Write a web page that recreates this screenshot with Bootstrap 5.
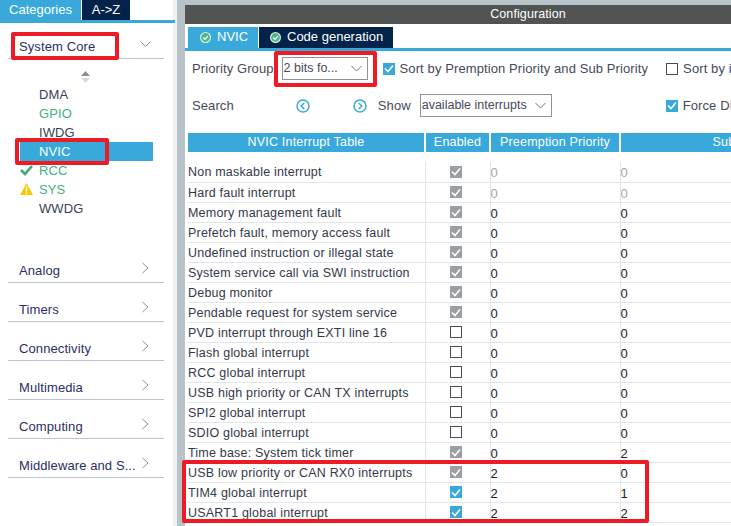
<!DOCTYPE html>
<html lang="en">

<head>
    <meta charset="utf-8">
    <meta name="viewport" content="width=device-width, initial-scale=1">
    <title>Configuration</title>
    <link href="https://cdn.jsdelivr.net/npm/bootstrap@5.3.2/dist/css/bootstrap.min.css" rel="stylesheet">
    <style>
        html, body {
            height: 526px;
            overflow: hidden;
        }

        body {
            background-color: #fff;
            font-family: "Liberation Sans", Arial, sans-serif;
            font-size: 13px;
            color: #3a3f55;
        }

        .app-wrap {
            width: 731px;
            height: 526px;
            position: relative;
            overflow: hidden;
        }

        /* left panel */
        .side-panel {
            width: 177px;
            flex: none;
            border-right: 4px solid #eef0f1;
        }

        .side-tabs {
            height: 23px;
            margin-right: -2px;
            border-bottom: 3px solid #39a9db;
        }

        .side-tab {
            height: 20px;
            line-height: 19px;
            color: #fff;
            text-align: center;
        }

        .tab-blue {
            background-color: #39a9db;
        }

        .tab-navy {
            background-color: #03234b;
        }

        .cat-head {
            height: 39px;
            margin: 0 9px 0 8px;
            padding: 0 13px 2px 11px;
            border-bottom: 1px solid #b9c4cc;
            color: #2a2f66;
            font-size: 13px;
            letter-spacing: .1px;
            white-space: nowrap;
        }

        .cat-head svg {
            margin-bottom: 6px;
        }

        .cat-first {
            height: 27px;
            margin-top: 9px;
        }

        .cat-arrow {
            margin-right: 2px;
        }

        .scroll-mark {
            height: 26px;
            padding: 12px 0 0 81px;
        }

        .core-list {
            height: 133px;
            margin-bottom: 26px;
        }

        .core-item {
            height: 19px;
            line-height: 19px;
            margin: 0 20px;
            padding-left: 19px;
            position: relative;
            letter-spacing: .1px;
        }

        .core-green {
            color: #3fb27f;
        }

        .core-active {
            background-color: #39a9db;
            color: #fff;
        }

        .core-icon {
            position: absolute;
            left: 0;
            top: 3px;
        }

        /* gutter */
        .split-bar {
            width: 8px;
            flex: none;
            background-color: #b7c3c9;
        }

        /* main */
        .main-panel {
            flex: 1;
            min-width: 0;
            overflow: hidden;
        }

        .top-strip {
            height: 5px;
            background-color: #b7c3c9;
        }

        .title-bar {
            height: 19px;
            line-height: 19px;
            padding-left: 140px;
            background-color: #525453;
            color: #fff;
            text-align: center;
            font-size: 12.5px;
            letter-spacing: .1px;
        }

        .cfg-tabs {
            height: 27px;
            padding: 3px 0 0 3px;
            border-bottom: 3px solid #39a9db;
        }

        .cfg-tab {
            height: 21px;
            line-height: 20px;
            color: #fff;
            white-space: nowrap;
        }

        .tab-nvic {
            width: 70px;
            margin-right: 1px;
            padding-left: 12px;
        }

        .tab-code {
            width: 134px;
            padding-left: 11px;
        }

        .tab-dot {
            vertical-align: -2px;
            margin-right: 6px;
        }

        .opt-row {
            white-space: nowrap;
            letter-spacing: .1px;
            color: #444a5a;
            padding-left: 7px;
        }

        .opt-one {
            height: 35px;
        }

        .opt-two {
            height: 39px;
        }

        .fake-select {
            height: 23px;
            line-height: 21px;
            border: 1px solid #8e9496;
            padding-left: 1px;
            position: relative;
            flex: none;
            font-size: 12.5px;
            letter-spacing: 0;
        }

        .fake-select svg {
            position: absolute;
            right: 5px;
            top: 7px;
        }

        .sel-group {
            width: 86px;
            margin: 0 15px 0 8px;
        }

        .sel-show {
            width: 132px;
            margin-left: 9px;
        }

        .box {
            width: 12px;
            height: 12px;
            display: inline-flex;
            align-items: center;
            justify-content: center;
            flex: none;
            vertical-align: middle;
        }

        .box-gap {
            margin-right: 5px;
        }

        .box-blue {
            background-color: #39a9db;
        }

        .box-gray {
            background-color: #9a9fa3;
        }

        .box-empty {
            border: 1px solid #4a4f55;
        }

        .nav-dot {
            flex: none;
        }

        .nav-prev {
            margin-left: 62px;
        }

        .nav-next {
            margin: 0 11px 0 43px;
        }

        .box-sort {
            margin-left: 18px;
        }

        .box-force {
            margin-left: 114px;
        }

        /* table */
        .irq-table {
            table-layout: fixed;
            width: 684px;
            margin: 8px 0 0 3px;
            border-collapse: collapse;
            font-size: 12.5px;
            letter-spacing: .2px;
        }

        .irq-table th {
            height: 19px;
            padding: 0;
            background-color: #39a9db;
            color: #fff;
            font-weight: 400;
            text-align: center;
            border: 0;
            border-right: 2px solid #fff;
            white-space: nowrap;
            overflow: hidden;
        }

        .irq-table .head-gap td {
            height: 10px;
            padding: 0;
            border: 0;
        }

        .irq-table td {
            height: 20px;
            padding: 2px 0 0;
            border: 0;
            border-bottom: 1px solid #e3e6e8;
            border-right: 1px solid #e3e6e8;
            color: #34384a;
            white-space: nowrap;
            vertical-align: middle;
            line-height: 17px;
        }

        .irq-table td.num {
            color: #1c2030;
            font-size: 13px;
        }

        .irq-table td.num-dim {
            color: #a3a8ab;
        }

        .irq-table td.cell-box {
            padding: 0 4px 0 0;
            text-align: center;
        }

        /* red marks from the reference */
        .red-mark {
            position: absolute;
            border: 4px solid #ed1c24;
            border-radius: 2px;
            pointer-events: none;
        }

        .mark-core {
            left: 11px;
            top: 32px;
            width: 108px;
            height: 28px;
        }

        .mark-nvic {
            left: 15px;
            top: 138px;
            width: 94px;
            height: 27px;
        }

        .mark-group {
            left: 274px;
            top: 51px;
            width: 103px;
            height: 36px;
        }

        .mark-rows {
            left: 182px;
            top: 460px;
            width: 467px;
            height: 63px;
        }
    </style>
</head>

<body>
    <div class="app-wrap d-flex">
        <div class="side-panel">
            <div class="side-tabs d-flex">
                <div class="side-tab tab-blue" style="width: 81px">Categories</div>
                <div class="side-tab tab-navy" style="width: 48px; margin-left: 1px">A-&gt;Z</div>
            </div>
            <div class="cat-head cat-first d-flex justify-content-between align-items-end">
                <span>System Core</span>
                <svg width="11" height="12" viewBox="0 0 11 12" fill="none" stroke="#8a8f94"><path d="M.5 3.5l5 5 5-5"/></svg>
            </div>
            <div class="scroll-mark">
                <svg class="d-block" width="9" height="12" viewBox="0 0 9 12"><path d="M4.5 0L9 5H0z" fill="#8a8f94"/><path d="M0 7h9L4.5 12z" fill="#d5d8da"/></svg>
            </div>
            <div class="core-list" id="coreList"></div>
            <div id="catList"></div>
        </div>

        <div class="split-bar"></div>

        <div class="main-panel">
            <div class="top-strip"></div>
            <div class="title-bar">Configuration</div>
            <div class="cfg-tabs d-flex">
                <div class="cfg-tab tab-blue tab-nvic" id="tabNvic">NVIC</div>
                <div class="cfg-tab tab-navy tab-code" id="tabCode">Code generation</div>
            </div>
            <div class="opt-row opt-one d-flex align-items-center">
                <span>Priority Group</span>
                <div class="fake-select sel-group">2 bits fo...
                    <svg width="11" height="8" viewBox="0 0 11 8" fill="none" stroke="#6f7478"><path d="M.5 1l5 5 5-5"/></svg>
                </div>
                <span class="box box-blue box-gap" id="boxSort"></span>
                <span>Sort by Premption Priority and Sub Priority</span>
                <span class="box box-empty box-gap box-sort"></span>
                <span>Sort by interrupts</span>
            </div>
            <div class="opt-row opt-two d-flex align-items-center">
                <span>Search</span>
                <svg class="nav-dot nav-prev" width="14" height="14" viewBox="0 0 14 14" fill="none" stroke="#39a9db"><circle cx="7" cy="7" r="6" stroke-width="1.5"/><path d="M8.2 4L5.2 7l3 3" stroke-width="1.5"/></svg>
                <svg class="nav-dot nav-next" width="14" height="14" viewBox="0 0 14 14" fill="none" stroke="#39a9db"><circle cx="7" cy="7" r="6" stroke-width="1.5"/><path d="M5.8 4l3 3-3 3" stroke-width="1.5"/></svg>
                <span>Show</span>
                <div class="fake-select sel-show">available interrupts
                    <svg width="11" height="8" viewBox="0 0 11 8" fill="none" stroke="#6f7478"><path d="M.5 1l5 5 5-5"/></svg>
                </div>
                <span class="box box-blue box-gap box-force" id="boxForce"></span>
                <span>Force DMA channels Interrupts</span>
            </div>
            <table class="table irq-table">
                <colgroup>
                    <col style="width: 237px">
                    <col style="width: 65px">
                    <col style="width: 130px">
                    <col style="width: 252px">
                </colgroup>
                <thead>
                    <tr>
                        <th>NVIC Interrupt Table</th>
                        <th>Enabled</th>
                        <th>Preemption Priority</th>
                        <th>Sub Priority</th>
                    </tr>
                </thead>
                <tbody id="irqBody"></tbody>
            </table>
        </div>

        <div class="red-mark mark-core"></div>
        <div class="red-mark mark-nvic"></div>
        <div class="red-mark mark-group"></div>
        <div class="red-mark mark-rows"></div>
    </div>

    <script src="https://cdn.jsdelivr.net/npm/bootstrap@5.3.2/dist/js/bootstrap.bundle.min.js"></script>
    <script>
        var tick = `<svg width="10" height="9" viewBox="0 0 10 9" fill="none" stroke="#fff" stroke-width="1.6"><path d="M1 4.5l3 3 5-6"/></svg>`;
        var tabDot = `<svg class="tab-dot" width="11" height="11" viewBox="0 0 12 12"><circle cx="6" cy="6" r="6" fill="#dff1ea"/><circle cx="6" cy="6" r="4.8" fill="#4fb58a"/><path d="M3.5 6l2 2 3-3.6" fill="none" stroke="#fff" stroke-width="1.3"/></svg>`;

        document.querySelector("#boxSort").innerHTML = tick;
        document.querySelector("#boxForce").innerHTML = tick;
        document.querySelector("#tabNvic").insertAdjacentHTML("afterbegin", tabDot);
        document.querySelector("#tabCode").insertAdjacentHTML("afterbegin", tabDot);

        var core = [
            { name: "DMA" },
            { name: "GPIO", cls: "core-green" },
            { name: "IWDG" },
            { name: "NVIC", cls: "core-active" },
            { name: "RCC", cls: "core-green", icon: `<svg class="core-icon" width="13" height="12" viewBox="0 0 13 12" fill="none" stroke="#3fa873" stroke-width="2.6"><path d="M1 6l4 4 7-8"/></svg>` },
            { name: "SYS", cls: "core-green", icon: `<svg class="core-icon" width="13" height="12" viewBox="0 0 13 12"><path d="M6.5 0L13 12H0z" fill="#fbc902"/><path d="M6.5 3.5v5M6.5 9.5v1.5" stroke="#fff" stroke-width="1.4"/></svg>` },
            { name: "WWDG" },
        ];
        document.querySelector("#coreList").innerHTML = core.map((c) =>
            `<div class="core-item ${c.cls || ""}">${c.icon || ""}${c.name}</div>`).join("");

        var cats = ["Analog", "Timers", "Connectivity", "Multimedia", "Computing", "Middleware and S..."];
        document.querySelector("#catList").innerHTML = cats.map((c) =>
            `<div class="cat-head d-flex justify-content-between align-items-end">
                <span>${c}</span>
                <svg class="cat-arrow" width="7" height="12" viewBox="0 0 7 12" fill="none" stroke="#8a8f94"><path d="M.5 1l5.5 5-5.5 5"/></svg>
            </div>`).join("");

        // name, enabled state (g = gray check, n = empty, b = blue), preemption, sub, dimmed
        var rows = [
            ["Non maskable interrupt", "g", 0, 0, true],
            ["Hard fault interrupt", "g", 0, 0, true],
            ["Memory management fault", "g", 0, 0],
            ["Prefetch fault, memory access fault", "g", 0, 0],
            ["Undefined instruction or illegal state", "g", 0, 0],
            ["System service call via SWI instruction", "g", 0, 0],
            ["Debug monitor", "g", 0, 0],
            ["Pendable request for system service", "g", 0, 0],
            ["PVD interrupt through EXTI line 16", "n", 0, 0],
            ["Flash global interrupt", "n", 0, 0],
            ["RCC global interrupt", "n", 0, 0],
            ["USB high priority or CAN TX interrupts", "n", 0, 0],
            ["SPI2 global interrupt", "n", 0, 0],
            ["SDIO global interrupt", "n", 0, 0],
            ["Time base: System tick timer", "g", 0, 2],
            ["USB low priority or CAN RX0 interrupts", "g", 2, 0],
            ["TIM4 global interrupt", "b", 2, 1],
            ["USART1 global interrupt", "b", 2, 2],
        ];
        var boxes = {
            g: `<span class="box box-gray">${tick}</span>`,
            b: `<span class="box box-blue">${tick}</span>`,
            n: `<span class="box box-empty"></span>`,
        };
        document.querySelector("#irqBody").innerHTML =
            `<tr class="head-gap"><td colspan="4"></td></tr>` +
            rows.map((r) => {
                var dim = r[4] ? "num-dim" : "";
                return `<tr>
                    <td>${r[0]}</td>
                    <td class="cell-box">${boxes[r[1]]}</td>
                    <td class="num ${dim}">${r[2]}</td>
                    <td class="num ${dim}">${r[3]}</td>
                </tr>`;
            }).join("");
    </script>
</body>

</html>
